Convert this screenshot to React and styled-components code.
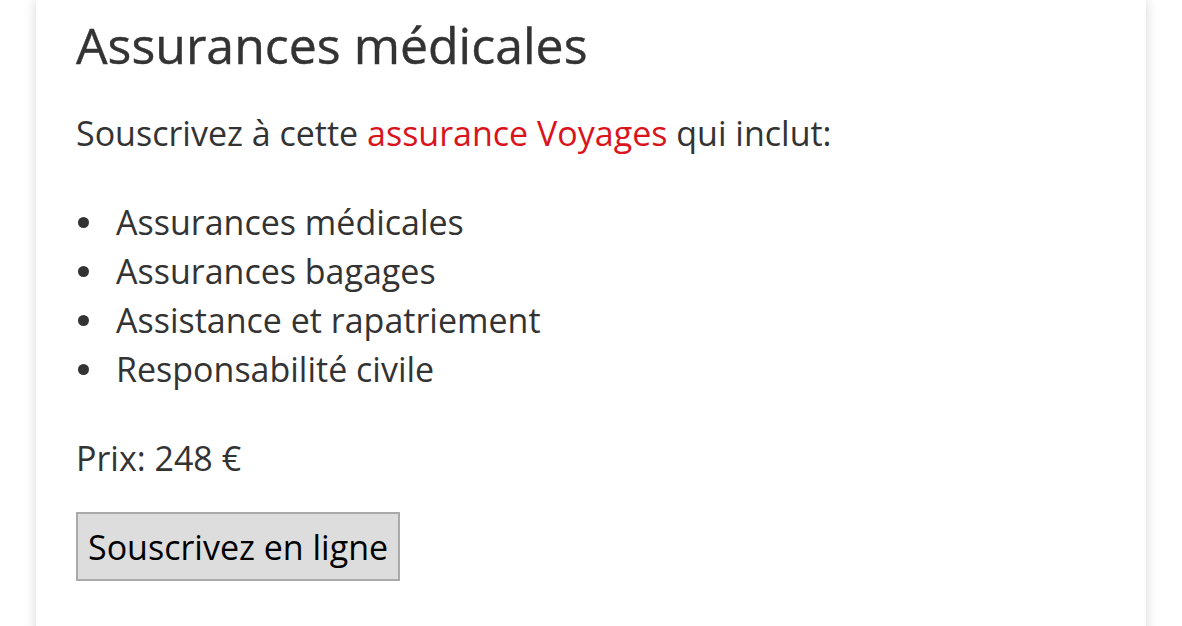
import React from 'react';
import styled, { createGlobalStyle } from 'styled-components';

const GlobalStyle = createGlobalStyle`
  html, body {
    margin: 0;
    padding: 0;
    background: #fff;
    overflow: hidden;
  }
`;

const Page = styled.div`
  padding: 0 36px;
  height: 626px;
  font-family: 'Open Sans', 'Noto Sans', sans-serif;
  color: #333;
`;

const Card = styled.section`
  background: #fff;
  height: 100%;
  padding: 12px 40px 0;
  box-shadow: 0 0 12px rgba(0, 0, 0, 0.16);
`;

const Title = styled.h2`
  margin: 0;
  font-size: 50px;
  font-weight: 400;
  line-height: 66px;
  -webkit-text-stroke: 0.4px #333;
`;

const Intro = styled.p`
  margin: 31px 0 0;
  font-size: 34px;
  line-height: 49px;
`;

const Link = styled.a`
  color: #d9141c;
  text-decoration: none;
`;

const List = styled.ul`
  margin: 40px 0 0;
  padding: 0 0 0 40px;
  list-style: none;
  font-size: 34px;
  line-height: 49px;
`;

const Item = styled.li`
  position: relative;

  &::before {
    content: '';
    position: absolute;
    left: -38px;
    top: 19px;
    width: 11px;
    height: 11px;
    border-radius: 50%;
    background: #333;
  }
`;

const Price = styled.p`
  margin: 40px 0 0;
  font-size: 34px;
  line-height: 49px;
`;

const Button = styled.button`
  display: block;
  margin-top: 29px;
  padding: 10px 10px 9px;
  font-family: inherit;
  font-size: 34px;
  line-height: 46px;
  color: #000;
  background: #ddd;
  border: 2px solid #aaa;
  border-radius: 0;
`;

const items = [
  'Assurances médicales',
  'Assurances bagages',
  'Assistance et rapatriement',
  'Responsabilité civile',
];

export default function App() {
  return (
    <Page>
      <GlobalStyle />
      <Card>
        <Title>Assurances médicales</Title>
        <Intro>
          Souscrivez à cette <Link href="#">assurance Voyages</Link> qui inclut:
        </Intro>
        <List>
          {items.map(item => <Item key={item}>{item}</Item>)}
        </List>
        <Price>Prix: 248 €</Price>
        <Button>Souscrivez en ligne</Button>
      </Card>
    </Page>
  );
}
